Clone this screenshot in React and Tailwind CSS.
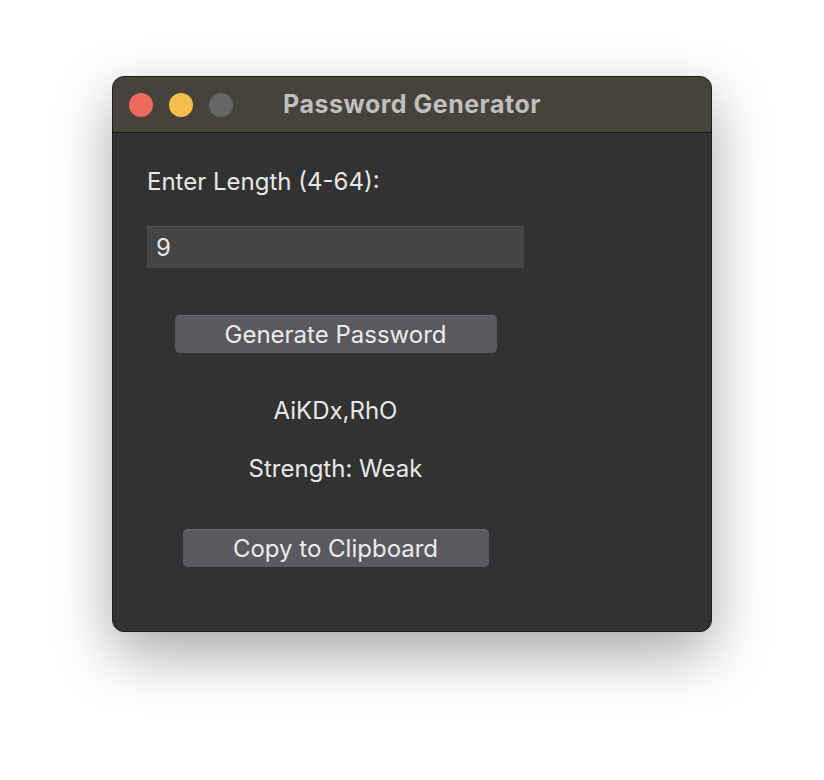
import React from 'react';

const font = { fontFamily: 'Inter, "Noto Sans", sans-serif' };

const TrafficLights = () => (
  <div className="flex items-center gap-4">
    <span className="w-6 h-6 rounded-full bg-[#ec6a5e]" />
    <span className="w-6 h-6 rounded-full bg-[#f4bf4f]" />
    <span className="w-6 h-6 rounded-full bg-[#666666]" />
  </div>
);

export default function App() {
  return (
    <div className="min-h-[780px] w-full bg-white flex justify-center pt-[76px]" style={font}>
      <div className="w-[600px] h-[556px] rounded-[12px] overflow-hidden border border-[#1c1c1c] bg-[#323232] shadow-[0_22px_60px_rgba(0,0,0,0.35)] flex flex-col">
        {/* Title bar */}
        <div className="relative h-[56px] bg-[#45433c] border-b border-[#1a1a1a] flex items-center px-4">
          <TrafficLights />
          <div className="absolute inset-0 flex items-center justify-center text-[25px] font-bold tracking-[0.02em] text-[#c0bfbb] pointer-events-none">
            Password Generator
          </div>
        </div>

        {/* Body */}
        <div className="flex-1 pl-[34px] pt-[35px]">
          <div className="w-[377px] flex flex-col">
            <div className="h-7 leading-7 text-[24px] text-[#e8e8e8]">Enter Length (4-64):</div>

            <div className="mt-[30px] h-[42px] bg-[#454545] border-t border-[#555] flex items-center px-[9px] text-[24px] text-[#e8e8e8]">
              9
            </div>

            <div className="mt-[47px] flex justify-center">
              <button className="w-[322px] h-[38px] rounded-[5px] bg-[#5b5960] border-t border-[#6c6a70] text-[24px] leading-7 text-[#ececec]">
                Generate Password
              </button>
            </div>

            <div className="mt-[44px] h-7 leading-7 text-center text-[24px] text-[#e8e8e8]">AiKDx,RhO</div>
            <div className="mt-[30px] h-7 leading-7 text-center text-[24px] text-[#e8e8e8]">Strength: Weak</div>

            <div className="mt-[46px] flex justify-center">
              <button className="w-[306px] h-[38px] rounded-[5px] bg-[#5b5960] border-t border-[#6c6a70] text-[24px] leading-7 text-[#ececec]">
                Copy to Clipboard
              </button>
            </div>
          </div>
        </div>
      </div>
    </div>
  );
}
